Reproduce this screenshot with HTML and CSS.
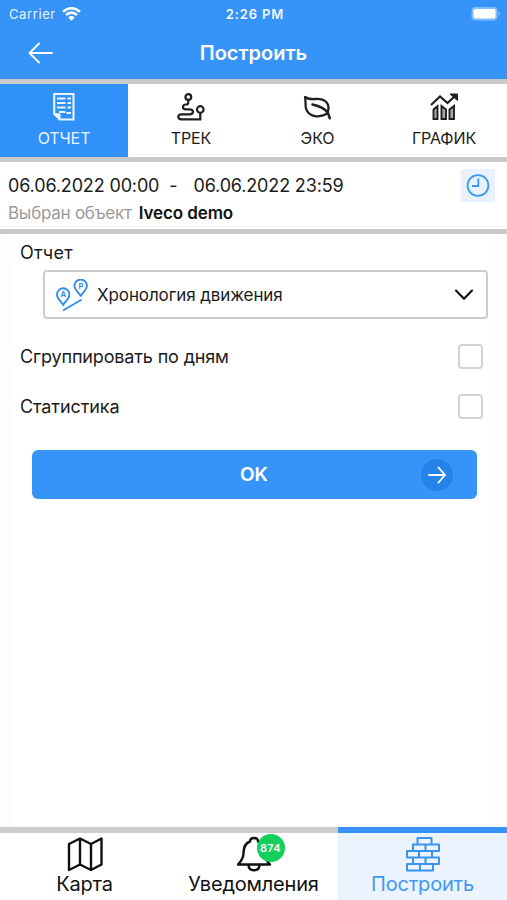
FILE: index.html
```html
<!DOCTYPE html>
<html lang="ru">
<head>
<meta charset="utf-8">
<meta name="viewport" content="width=device-width, initial-scale=1">
<title>Построить</title>
<link rel="stylesheet" href="styles.css">
</head>
<body>
<div class="app">
  <header class="header">
    <div class="status">
      <div class="carrier"><span>Carrier</span>
        <svg width="19" height="14" viewBox="0 0 19 14" fill="none" stroke="#fff" stroke-width="2.500"><path d="M1 4.800Q9.500-2.400 18 4.800M4 8Q9.500 3.200 15 8"/><path d="M6.300 10.400Q9.500 7.800 12.700 10.400L9.500 13.700Z" fill="#fff" stroke="none"/></svg>
      </div>
      <span class="clock">2:26 PM</span>
      <div class="battery-wrap"><svg width="30" height="14" viewBox="0 0 30 14"><rect x=".5" y="0" width="26" height="13.500" rx="4" fill="#84bdfb"/><rect x="2.500" y="2" width="22" height="9.500" rx="2" fill="#fff"/><path d="M27.500 4.800q3 2.200 0 4.400z" fill="#84bdfb"/></svg></div>
    </div>
    <div class="titlebar">
      <svg class="back" width="26" height="22" viewBox="0 0 26 22" fill="none" stroke="#fff" stroke-width="1.800" stroke-linecap="round" stroke-linejoin="round"><path d="M11 1.500 1.500 11 11 20.500M1.500 11H24"/></svg>
      <h1>Построить</h1>
    </div>
  </header>

  <nav class="tabs">
    <a class="tab active">
      <svg width="30" height="30" viewBox="0 0 30 30" fill="none" stroke="#eaf5ff" stroke-width="2.100"><path d="M5.200 2H24.500V27.500H11L5.200 22Z"/><path d="M5.200 21.500 11 22V28Z" fill="#eaf5ff" stroke-width="1"/><path d="M8 6.500H16.500M8 11H16.500M8 15.500H16.500M10 20H16.500M18.500 6.500h3.500M18.500 11h3.500M18.500 15.500h3.500M17.500 21h4.500" stroke-width="1.900"/></svg>
      <span>ОТЧЕТ</span>
    </a>
    <a class="tab">
      <svg width="30" height="30" viewBox="0 0 30 30" fill="none" stroke="#202020" stroke-width="2.200" stroke-linecap="round"><circle cx="12.300" cy="5" r="2.900"/><circle cx="24.300" cy="17.500" r="3.300"/><path d="M12.300 8.500V10.500Q12.300 12.500 10 12.500Q7 12.500 7 14.900Q7 17.300 10 17.300H13.500Q17 17.300 17 19.800Q17 22.300 13.500 22.300H5.500Q2.300 22.300 2.300 24.800Q2.300 27.300 5.500 27.300H24.300V21.500"/></svg>
      <span>ТРЕК</span>
    </a>
    <a class="tab">
      <svg width="30" height="30" viewBox="0 0 30 30" fill="none" stroke="#202020" stroke-width="2.300" stroke-linecap="round" stroke-linejoin="round"><path d="M2 5C7 9 13 5.800 18.500 7.300C25.500 9.300 27 15.500 24 21.800C16 26 7 25 3.500 18C1.500 13.500 3.300 9 2 5Z"/><path d="M9.500 12.500Q21 15 25 21L26.800 26.300" stroke-width="2.500"/></svg>
      <span>ЭКО</span>
    </a>
    <a class="tab">
      <svg width="30" height="30" viewBox="0 0 30 30" fill="none" stroke="#202020" stroke-width="2.200"><path d="M2 13 11 4.500 18.500 11 26 4"/><path d="M21 2H28.500V8.500Z" fill="#202020" stroke="#202020" stroke-width="1"/><path d="M4.500 27V17.500L8.500 14V27ZM12.500 27V14L17 17.500V27ZM20.500 27V17.500L25 14V27Z" fill="#aaa" stroke-width="1.900"/></svg>
      <span>ГРАФИК</span>
    </a>
  </nav>

  <section class="info">
    <div class="period"><span class="date">06.06.2022 00:00</span><span class="dash">-</span><span class="date">06.06.2022 23:59</span></div>
    <div class="object"><span class="object-label">Выбран объект</span><b>Iveco demo</b></div>
    <button class="time-btn" aria-label="Время"><svg width="24" height="24" viewBox="0 0 24 24" fill="none" stroke="#3b98f5" stroke-width="1.800"><circle cx="12" cy="11.500" r="10.400"/><path d="M12.300 4.500V12H6"/></svg></button>
  </section>

  <main class="content">
    <div class="label">Отчет</div>
    <div class="select">
      <svg class="route" width="32" height="32" viewBox="0 0 32 32" fill="none" stroke="#318ef0" stroke-width="1.900" stroke-linecap="round" stroke-linejoin="round"><path d="M7.200 26C5.500 22.500 1 20 1 15.500A6.200 6.200 0 0 1 13.400 15.500C13.400 20 9 22.500 7.200 26ZM24.700 17C23 13.500 18.500 11 18.500 6.700A6.200 6.200 0 0 1 30.900 6.700C30.900 11 26.500 13.500 24.700 17ZM7.800 31 25 21"/><g fill="#318ef0" stroke="none" font-family="Inter,sans-serif" font-weight="700" font-size="7.500" text-anchor="middle"><text x="7.200" y="18.300">A</text><text x="25" y="9.500">P</text></g></svg>
      <span>Хронология движения</span>
      <svg class="chevron" width="20" height="12" viewBox="0 0 20 12" fill="none" stroke="#111" stroke-width="2.100" stroke-linecap="round" stroke-linejoin="round"><path d="M2 1.500 10 9.800 18 1.500"/></svg>
    </div>
    <label class="check-row"><span class="t-group">Сгруппировать по дням</span><i class="box"></i></label>
    <label class="check-row"><span class="t-stat">Статистика</span><i class="box"></i></label>
    <button class="ok"><span>OK</span><i class="ok-icon"><svg width="20" height="18" viewBox="0 0 20 18" fill="none" stroke="#fff" stroke-width="1.900" stroke-linecap="round" stroke-linejoin="round"><path d="M2 9H18M11.500 1.500 18 9 11.500 16.500"/></svg></i></button>
  </main>

  <nav class="bottom">
    <a class="item">
      <svg width="36" height="36" viewBox="0 0 36 36" fill="none" stroke="#111" stroke-width="2.400" stroke-linejoin="round"><path d="M2 8 13 2.500 24 8 34.500 2.500V28.500L24 34 13 28.500 2 34ZM13 2.500V28.500M24 8V34"/></svg>
      <span>Карта</span>
    </a>
    <a class="item">
      <div class="bell"><svg width="36" height="36" viewBox="0 0 36 36" fill="none" stroke="#111" stroke-width="2.400" stroke-linecap="round" stroke-linejoin="round"><path d="M14 5.500Q14 2 18 2T22 5.500C27.500 7.500 28.500 12 28.500 17C28.500 22 30 24.500 34 28.500H2C6 24.500 7.500 22 7.500 17C7.500 12 8.500 7.500 14 5.500ZM12.500 28.500Q12.500 34.200 18 34.200T23.500 28.500"/></svg><span class="badge">874</span></div>
      <span>Уведомления</span>
    </a>
    <a class="item active">
      <svg width="36" height="36" viewBox="0 0 36 36" fill="none" stroke="#3b94ec" stroke-width="2" stroke-linejoin="round"><path d="M12.500 2H26.500V8.500H12.500ZM8 8.500H20.500V15H8ZM20.500 8.500H34V15H20.500ZM2 15H14V21.500H2ZM14 15H27V21.500H14ZM8 21.500H20.500V28H8ZM20.500 21.500H34V28H20.500ZM2 28H15V34.500H2ZM15 28H28V34.500H15Z"/></svg>
      <span>Построить</span>
    </a>
  </nav>
</div>
</body>
</html>
```

FILE: styles.css
```css
* { box-sizing: border-box; }
body { margin: 0; font-family: Inter, "Liberation Sans", sans-serif; color: #1b1b1b; background: #fff; }
svg { display: block; flex: none; }
span, h1, b { white-space: nowrap; }
button { font-family: inherit; border: 0; padding: 0; }
.app { width: 507px; height: 900px; display: flex; flex-direction: column; overflow: hidden; }

.header { height: 84px; flex: none; background: #3693f8; border-bottom: 5px solid #c9c9c9; color: #fff; }
.status { height: 27px; display: grid; grid-template-columns: 1fr auto 1fr; align-items: center; padding: 0 6px 0 9px; font-size: 13px; }
.carrier { display: flex; align-items: center; gap: 6px; color: #e6f2ff; letter-spacing: .6px; }
.clock { font-weight: 600; letter-spacing: .85px; color: #f0f7ff; }
.battery-wrap { display: flex; justify-content: flex-end; }
.titlebar { height: 51px; display: grid; grid-template-columns: 1fr auto 1fr; align-items: center; padding: 0 28px; }
h1 { margin: 0; font-size: 20px; font-weight: 600; line-height: 24px; }

.tabs { height: 78px; flex: none; display: grid; grid-template-columns: 128px 126px 127px 126px; border-bottom: 5px solid #c9c9c9; }
.tab { display: flex; flex-direction: column; align-items: center; padding-top: 8px; gap: 6px; font-size: 16px; line-height: 20px; }
.tab span { letter-spacing: -.1px; }
.tab.active { background: #3091fa; color: #e9f4ff; }

.info { height: 72px; flex: none; position: relative; padding: 12px 8px 0; border-bottom: 5px solid #cacaca; }
.period { display: flex; font-size: 18px; line-height: 24px; letter-spacing: -.15px; }
.dash { margin: 0 16px 0 10px; }
.object { display: flex; gap: 7px; font-size: 17px; line-height: 22px; margin-top: 4px; }
.object-label { color: #999; letter-spacing: -.25px; }
.object b { font-weight: 600; color: #111; letter-spacing: -.1px; }
.time-btn { position: absolute; right: 12px; top: 7px; width: 34px; height: 33px; display: grid; place-items: center; background: #e7f2fe; border-radius: 2px; }

.content { flex: 1; border: solid #fdfdfd; border-width: 0 12px; padding: 7px 7px 0 8px; }
.label { font-size: 18px; line-height: 24px; letter-spacing: .3px; }
.select { margin: 5px 0 0 23px; height: 49px; display: flex; align-items: center; border: 2px solid #ccc; border-radius: 4px; padding: 0 12px 0 11px; font-size: 17px; }
.select span { margin-left: 9px; letter-spacing: -.1px; }
.chevron { margin-left: auto; }
.check-row { display: flex; justify-content: space-between; align-items: center; height: 50px; padding-right: 5px; font-size: 18px; }
.t-group { letter-spacing: -.15px; }
.t-stat { letter-spacing: -.1px; }
.select + .check-row { margin-top: 12px; }
.box { width: 25px; height: 25px; border: 2px solid #d2d2d2; border-radius: 4px; }
.ok { margin: 19px 12px 0 11.500px; width: 445px; height: 49px; display: grid; grid-template-columns: 1fr auto 1fr; align-items: center; padding: 0 24px; border-radius: 6px; background: #3693f8; color: #fff; font-size: 19px; font-weight: 600; }
.ok span { grid-column: 2; }
.ok-icon { justify-self: end; width: 32px; height: 32px; border-radius: 50%; background: #2383ea; display: grid; place-items: center; }

.bottom { height: 73px; flex: none; display: grid; grid-template-columns: repeat(3, 1fr); }
.item { display: flex; flex-direction: column; align-items: center; border-top: 6px solid #cdcdcd; padding-top: 3px; font-size: 20px; line-height: 24px; letter-spacing: -.2px; color: #111; }
.item.active { background: #eaf3fe; border-color: #3693f8; color: #4198f0; }
.bell { position: relative; }
.badge { position: absolute; left: 21px; top: -2px; width: 28px; height: 28px; border-radius: 50%; background: #13cf5b; color: #fff; font-size: 11px; font-weight: 600; line-height: 28px; letter-spacing: .3px; text-align: center; }
```
